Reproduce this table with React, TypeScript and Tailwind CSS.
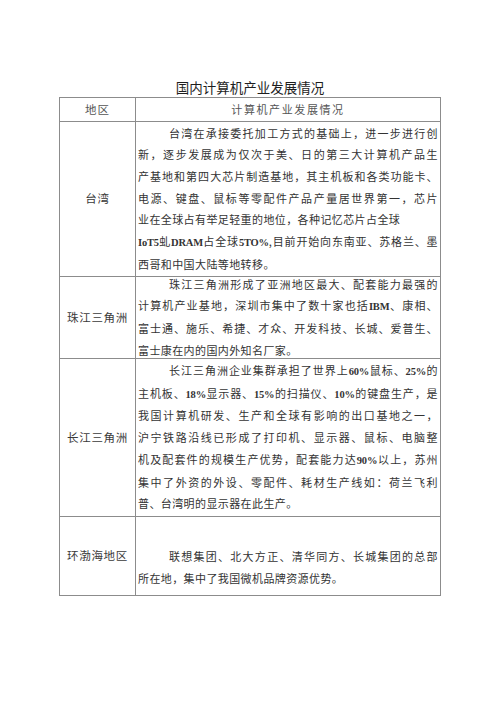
import React from "react";

const cjk = "font-['Noto_Sans_CJK_SC','Noto_Sans',sans-serif]";

function B({ children }: { children: React.ReactNode }) {
  return (
    <span className="font-bold text-[10.5px] tracking-[-0.2px] font-['Liberation_Serif','Noto_Sans_CJK_SC',serif]">
      {children}
    </span>
  );
}

// full = justified to both edges, indent = first line of paragraph
function Line({
  children,
  full,
  indent,
}: {
  children: React.ReactNode;
  full?: boolean;
  indent?: boolean;
}) {
  return (
    <div
      className={
        "whitespace-nowrap " +
        (full ? "text-justify [text-align-last:justify] " : "") +
        (indent ? "pl-[31px]" : "")
      }
    >
      {children}
    </div>
  );
}

function Row({
  label,
  height,
  top,
  children,
}: {
  label: string;
  height: string;
  top?: string;
  children: React.ReactNode;
}) {
  return (
    <>
      <div className={`${height} border-r border-b border-[#8c8c8c] flex items-center justify-center text-[11.5px] tracking-[0.7px] text-[#3a3a3a]`}>
        {label}
      </div>
      <div
        className={`${height} border-r border-b border-[#8c8c8c] flex flex-col px-[2px] text-[11px] leading-[21.7px] tracking-[0.4px] text-[#333] ${
          top ? top : "justify-center"
        }`}
      >
        {children}
      </div>
    </>
  );
}

export default function App() {
  return (
    <div className={`w-[500px] h-[707px] bg-white ${cjk}`}>
      <div className="pt-[77px] h-[97px] text-center text-[13.5px] leading-[20px] text-[#1e1e1e]">
        国内计算机产业发展情况
      </div>
      <div className="ml-[59px] w-[382px] grid grid-cols-[76px_305px] border-l border-t border-[#8c8c8c]">
        <div className="h-[24px] border-r border-b border-[#8c8c8c] flex items-center justify-center text-[11.5px] tracking-[1px] text-[#555]">
          地区
        </div>
        <div className="h-[24px] border-r border-b border-[#8c8c8c] flex items-center justify-center text-[11px] tracking-[1.6px] text-[#555]">
          计算机产业发展情况
        </div>

        <Row label="台湾" height="h-[155px]">
          <Line full indent>台湾在承接委托加工方式的基础上，进一步进行创</Line>
          <Line full>新，逐步发展成为仅次于美、日的第三大计算机产品生</Line>
          <Line full>产基地和第四大芯片制造基地，其主机板和各类功能卡、</Line>
          <Line full>电源、键盘、鼠标等零配件产品产量居世界第一，芯片</Line>
          <Line>业在全球占有举足轻重的地位，各种记忆芯片占全球</Line>
          <Line full>
            <B>IoT5</B>虬<B>DRAM</B>占全球<B>5TO%</B>,目前开始向东南亚、苏格兰、墨
          </Line>
          <Line>西哥和中国大陆等地转移。</Line>
        </Row>

        <Row label="珠江三角洲" height="h-[82px]">
          <Line full indent>珠江三角洲形成了亚洲地区最大、配套能力最强的</Line>
          <Line full>
            计算机产业基地，深圳市集中了数十家也括<B>IBM</B>、康相、
          </Line>
          <Line full>富士通、施乐、希捷、才众、开发科技、长城、爱普生、</Line>
          <Line>富士康在内的国内外知名厂家。</Line>
        </Row>

        <Row label="长江三角洲" height="h-[158px]">
          <Line full indent>
            长江三角洲企业集群承担了世界上<B>60%</B>鼠标、<B>25%</B>的
          </Line>
          <Line full>
            主机板、<B>18%</B>显示器、<B>15%</B>的扫描仪、<B>10%</B>的键盘生产，是
          </Line>
          <Line full>我国计算机研发、生产和全球有影响的出口基地之一，</Line>
          <Line full>沪宁铁路沿线已形成了打印机、显示器、鼠标、电脑整</Line>
          <Line full>
            机及配套件的规模生产优势，配套能力达<B>90%</B>以上，苏州
          </Line>
          <Line full>集中了外资的外设、零配件、耗材生产线如：荷兰飞利</Line>
          <Line>普、台湾明的显示器在此生产。</Line>
        </Row>

        <Row label="环渤海地区" height="h-[79px]" top="pt-[29px]">
          <Line full indent>联想集团、北大方正、清华同方、长城集团的总部</Line>
          <Line>所在地，集中了我国微机品牌资源优势。</Line>
        </Row>
      </div>
    </div>
  );
}
